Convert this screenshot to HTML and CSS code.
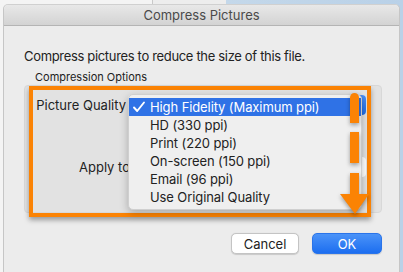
FILE: index.html
```html
<!DOCTYPE html>
<html>
<head>
<meta charset="utf-8">
<link rel="stylesheet" href="styles.css">
</head>
<body>
<div class="desktop">
  <div class="dialog">
    <div class="titlebar">Compress Pictures</div>
    <div class="content">
      <p class="intro">Compress pictures to reduce the size of this file.</p>
      <div class="group-label">Compression Options</div>
      <div class="groupbox">
        <div class="form">
          <span class="label">Picture Quality</span>
          <div class="popup"><span class="popup-arrows"></span></div>
          <span class="label shifted">Apply to</span>
          <div class="popup plain"></div>
        </div>
      </div>
      <div class="buttons">
        <button class="btn">Cancel</button>
        <button class="btn primary">OK</button>
      </div>
    </div>

    <div class="highlight-box"></div>

    <ul class="menu">
      <li class="item selected"><svg class="check" width="14" height="18" viewBox="0 0 14 18"><path d="M2 9.5 L5.2 13 L12 4.5" fill="none" stroke="#fff" stroke-width="1.9" stroke-linecap="round" stroke-linejoin="round"/></svg>High Fidelity (Maximum ppi)</li>
      <li class="item">HD (330 ppi)</li>
      <li class="item">Print (220 ppi)</li>
      <li class="item">On-screen (150 ppi)</li>
      <li class="item">Email (96 ppi)</li>
      <li class="item">Use Original Quality</li>
    </ul>

    <svg class="arrow" width="40" height="130" viewBox="0 0 40 130">
      <g fill="#fb8304">
        <path d="M12 7.5 a4.5 4.5 0 0 1 9 0 V33 H12 Z"/>
        <rect x="12" y="42" width="9" height="31"/>
        <rect x="12" y="83" width="9" height="22"/>
        <polygon points="2,104 31,104 17,124"/>
      </g>
    </svg>
  </div>
</div>
</body>
</html>
```
FILE: styles.css
```css
* { box-sizing: border-box; }
html, body { margin: 0; padding: 0; }
body {
  width: 403px;
  height: 272px;
  overflow: hidden;
  font-family: Inter, "Noto Sans", "Liberation Sans", sans-serif;
}
.desktop {
  width: 403px;
  height: 272px;
  padding: 4px 3px 0 3px;
  background:
    linear-gradient(to right, #f4f4f4 0, #f4f4f4 152px, #c9c9c9 152px, #c9c9c9 153px, #ededed 153px, #ededed 226px, #c4d8ea 226px, #b9d1e8 403px);
}
.dialog {
  position: relative;
  width: 397px;
  height: 268px;
  background: #ececec;
  border-radius: 5px 5px 0 0;
  border-left: 1px solid #c6c6c6;
  border-right: 1px solid #c6c6c6;
  border-top: 1px solid #d0d0d0;
}
.titlebar {
  height: 21px;
  border-bottom: 1px solid #b4b4b4;
  background: linear-gradient(#e8e8e8, #d3d3d3);
  border-radius: 5px 5px 0 0;
  text-align: center;
  font-size: 13px;
  line-height: 20px;
  color: #4a4a4a;
}
.content {
  padding: 0 0 0 20px;
}
.intro {
  margin: 22px 0 0 0;
  font-size: 13px;
  letter-spacing: -0.33px;
  line-height: 16px;
  color: #222;
}
.group-label {
  margin-top: 6px;
  padding-left: 11px;
  font-size: 11px;
  line-height: 14px;
  color: #222;
}
.groupbox {
  margin-top: 1px;
  width: 358px;
  height: 128px;
  background: #e2e2e2;
  border: 1px solid #d8d8d8;
  border-radius: 4px;
}
.form {
  display: grid;
  grid-template-columns: 88px 238px;
  grid-template-rows: 20px 20px;
  row-gap: 42px;
  column-gap: 2px;
  padding: 9px 0 0 13px;
  align-items: center;
}
.label {
  justify-self: end;
  font-size: 13px;
  color: #222;
  white-space: nowrap;
}
.label.shifted {
  margin-right: -4px;
}
.popup {
  height: 20px;
  background: #fff;
  border-radius: 4px;
  position: relative;
}
.popup-arrows {
  position: absolute;
  right: 0;
  top: 0;
  width: 16px;
  height: 20px;
  border-radius: 0 4px 4px 0;
  background: linear-gradient(#4c8ff5, #1f6ee8);
}
.buttons {
  display: flex;
  justify-content: flex-end;
  gap: 13px;
  margin-top: 20px;
  padding-right: 17px;
}
.btn {
  height: 21px;
  width: 68px;
  font-family: inherit;
  font-size: 13px;
  color: #222;
  background: #fff;
  border: 1px solid #c4c4c4;
  border-radius: 5px;
  padding: 0;
  box-shadow: 0 0.5px 1px rgba(0,0,0,0.15);
}
.btn.primary {
  width: 70px;
  color: #fff;
  border: 1px solid #2a74ea;
  background: linear-gradient(#4b93f8, #1c6ef0);
}
.highlight-box {
  position: absolute;
  left: 25px;
  top: 81px;
  width: 342px;
  height: 131px;
  border: 4px solid #fb8304;
  box-shadow: 0 3px 5px rgba(0,0,0,0.35);
}
.menu {
  position: absolute;
  left: 124px;
  top: 89px;
  width: 234px;
  height: 116px;
  margin: 0;
  padding: 3px 0 0 0;
  list-style: none;
  background: #efefef;
  border: 1px solid #cfcfcf;
  border-radius: 5px;
  box-shadow: 0 3px 8px rgba(0,0,0,0.25);
}
.item {
  height: 18px;
  line-height: 18px;
  padding-left: 21px;
  font-size: 13px;
  letter-spacing: -0.1px;
  color: #222;
  position: relative;
  white-space: nowrap;
}
.item.selected {
  background: #2f72e6;
  color: #fff;
}
.check {
  position: absolute;
  left: 3px;
  top: 0;
}
.arrow {
  position: absolute;
  left: 334px;
  top: 85px;
  filter: drop-shadow(0 2px 2px rgba(0,0,0,0.35));
}
```
